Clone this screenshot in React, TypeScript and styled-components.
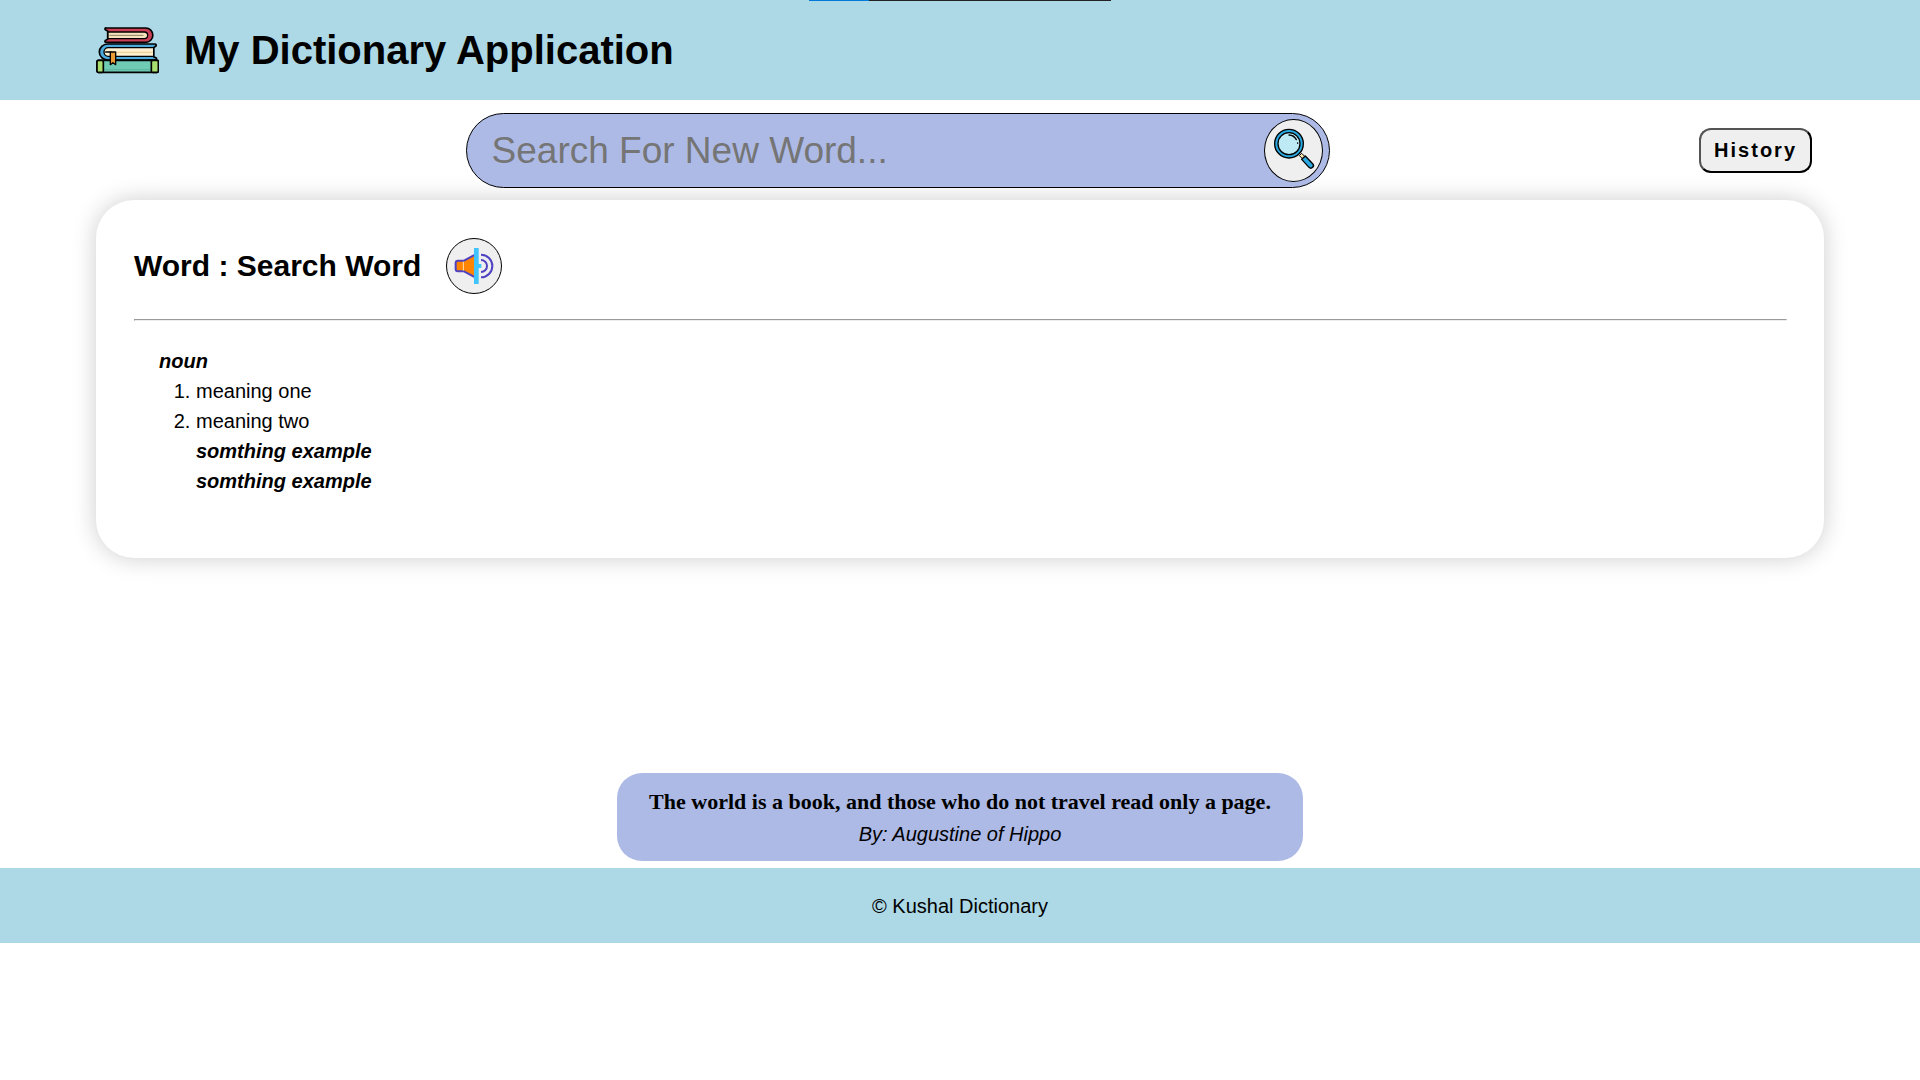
import React, { useState } from "react";
import styled, { createGlobalStyle } from "styled-components";

const GlobalStyle = createGlobalStyle`
  *, *::before, *::after { box-sizing: border-box; margin: 0; padding: 0; }
  body {
    background: #fff;
    color: #000;
    font-family: "Liberation Sans", Arial, sans-serif;
    font-size: 20px;
    line-height: 30px;
  }
`;

const LoadStrip = styled.div`
  position: absolute;
  top: 0;
  left: 0;
  right: 0;
  width: 302px;
  height: 1px;
  margin: 0 auto;
  background: linear-gradient(to right, #0078d7 20%, #222 20%);
`;

const Header = styled.header`
  display: flex;
  align-items: center;
  gap: 25px;
  height: 100px;
  padding: 0 5%;
  background: lightblue;
`;

const AppTitle = styled.h1`
  font-size: 40px;
  line-height: 60px;
`;

const SearchRow = styled.section`
  display: flex;
  align-items: center;
  justify-content: space-between;
  margin: 0 5%;
  padding: 13px 12px 12px 0;

  &::before { content: ""; }
`;

const SearchForm = styled.form`
  display: flex;
  align-items: center;
  width: 50%;
  min-width: 864px;
  height: 75px;
  padding: 0 6px 0 25px;
  border: 1px solid #000;
  border-radius: 38px;
  background: #adbae6;
`;

const SearchInput = styled.input`
  flex: 1;
  min-width: 0;
  border: 0;
  outline: 0;
  background: transparent;
  font-family: inherit;
  font-size: 37px;
  color: #000;

  &::placeholder { color: #757575; }
`;

const RoundButton = styled.button<{ $width: number; $height: number }>`
  display: flex;
  flex: none;
  align-items: center;
  justify-content: center;
  width: ${(p) => p.$width}px;
  height: ${(p) => p.$height}px;
  border: 1px solid #000;
  border-radius: 50%;
  background: #efefef;
  cursor: pointer;
`;

const HistoryButton = styled.button`
  height: 45px;
  padding: 0 13px;
  border: 2px outset #000;
  border-radius: 12px;
  background: #efefef;
  color: #000;
  font-family: inherit;
  font-size: 20px;
  font-weight: bold;
  letter-spacing: 2px;
  cursor: pointer;
`;

const Results = styled.main`
  min-height: 573px;
  padding: 0 5%;
`;

const Card = styled.article`
  padding: 38px 37px 37px 38px;
  border-radius: 38px;
  box-shadow: 0 0 25px rgba(0, 0, 0, 0.2);
`;

const WordHeader = styled.div`
  display: flex;
  align-items: center;
  gap: 25px;
  padding-bottom: 25px;
`;

const WordTitle = styled.h2`
  font-size: 30px;
  line-height: 44px;
`;

const Divider = styled.hr`
  border: 1px solid;
  border-color: #9a9a9a #ededed #ededed #9a9a9a;
`;

const Meanings = styled.div`
  padding: 25px;
`;

const WordType = styled.h3`
  font-size: 20px;
  font-style: italic;
`;

const MeaningList = styled.ol`
  padding-left: 37px;
`;

const Example = styled.p`
  font-weight: bold;
  font-style: italic;
`;

const Quote = styled.figure`
  width: fit-content;
  margin: 0 auto 7px;
  padding: 12px 32px;
  border-radius: 25px;
  background: #adbae6;
  text-align: center;
`;

const QuoteText = styled.blockquote`
  font-family: "Liberation Serif", "Times New Roman", serif;
  font-size: 22px;
  font-weight: bold;
  line-height: 34px;
`;

const QuoteAuthor = styled.figcaption`
  font-style: italic;
`;

const Footer = styled.footer`
  display: flex;
  align-items: center;
  justify-content: center;
  height: 75px;
  background: lightblue;
`;

const BooksIcon = () => (
  <svg width="63" height="63" viewBox="33 12 189 189" fill="none" stroke="#000" strokeWidth="5" strokeLinecap="round" strokeLinejoin="round" aria-hidden="true">
    <path d="M64 39H182a21 21 0 0 1 0 43H64a3 3 0 0 1-2-6l6-3V48l-6-3a3 3 0 0 1 2-6z" fill="#c83f56" />
    <path d="M69 51H178a10 10 0 0 1 0 20H69z" fill="#f4e3bd" strokeWidth="4" />
    <path d="M74 61H174" stroke="#8d8064" strokeWidth="3" />
    <path d="M210 87H68a25 24 0 0 0 0 48H210a3 3 0 0 0 2-7l-6-3V98l7-5a4 4 0 0 0-3-6z" fill="#4ba9dc" />
    <path d="M206 98H70a13 13 0 0 0 0 26H206z" fill="#fff0cf" strokeWidth="4" />
    <path d="M95 112H202" stroke="#f1cf9d" strokeWidth="4" />
    <path d="M62 111H78" strokeWidth="4" />
    <rect x="36" y="136" width="184" height="36" rx="4" fill="#70cbb4" />
    <path d="M60 164H193" stroke="#5db7a2" strokeWidth="4" />
    <rect x="36" y="136" width="19" height="36" rx="4" fill="#a9df70" />
    <rect x="199" y="136" width="21" height="36" rx="4" fill="#a9df70" />
    <path d="M76 111H92V149L84 143L76 149z" fill="#e99b32" strokeWidth="4" />
  </svg>
);

const MagnifierIcon = () => (
  <svg width="46" height="46" viewBox="61 67 138 138" fill="none" stroke="#000" strokeLinecap="round" strokeLinejoin="round" aria-hidden="true">
    <circle cx="118" cy="114" r="43" fill="#2ba8e0" strokeWidth="4" />
    <circle cx="118" cy="114" r="33" fill="#bdeaf5" strokeWidth="4" />
    <path d="M118 88a26 26 0 0 1 22 14M144 112v1" strokeWidth="4" />
    <path d="M150 149l6-6 9 9-6 6z" fill="#ffe7b0" strokeWidth="3" />
    <path d="M167 151l22 23a7 7 0 0 1-11 11l-22-24z" fill="#2ba8e0" strokeWidth="4" />
  </svg>
);

const SpeakerIcon = () => (
  <svg width="42" height="42" viewBox="54 45 126 126" fill="none" stroke="#4e42c3" strokeWidth="6" aria-hidden="true">
    <path d="M122 73L87 92H69a7 7 0 0 0-7 7v18a7 7 0 0 0 7 7h18l35 19z" fill="#ff8500" strokeLinejoin="round" />
    <path d="M85 95v27" stroke="#ffe0b8" strokeWidth="3" />
    <path d="M138 74a34 34 0 0 1 0 68M138 90a18 18 0 0 1 0 36" />
    <path d="M117 54h14v48h8v12h-8v48h-14z" fill="#40c4ff" stroke="none" />
  </svg>
);

export default function App() {
  const [word, setWord] = useState("");
  return (
    <>
      <GlobalStyle />
      <LoadStrip />
      <Header>
        <BooksIcon />
        <AppTitle>My Dictionary Application</AppTitle>
      </Header>
      <SearchRow>
        <SearchForm role="search" onSubmit={(e) => e.preventDefault()}>
          <SearchInput
            type="text"
            aria-label="Search for new word"
            placeholder="Search For New Word..."
            value={word}
            onChange={(e) => setWord(e.target.value)}
          />
          <RoundButton type="submit" aria-label="Search" $width={59} $height={63}>
            <MagnifierIcon />
          </RoundButton>
        </SearchForm>
        <HistoryButton type="button">History</HistoryButton>
      </SearchRow>
      <Results>
        <Card>
          <WordHeader>
            <WordTitle>Word : Search Word</WordTitle>
            <RoundButton type="button" aria-label="Listen" $width={56} $height={56}>
              <SpeakerIcon />
            </RoundButton>
          </WordHeader>
          <Divider />
          <Meanings>
            <WordType>noun</WordType>
            <MeaningList>
              <li>meaning one</li>
              <li>
                meaning two
                <Example>somthing example</Example>
                <Example>somthing example</Example>
              </li>
            </MeaningList>
          </Meanings>
        </Card>
      </Results>
      <Quote>
        <QuoteText>The world is a book, and those who do not travel read only a page.</QuoteText>
        <QuoteAuthor>By: Augustine of Hippo</QuoteAuthor>
      </Quote>
      <Footer>
        <p>© Kushal Dictionary</p>
      </Footer>
    </>
  );
}
